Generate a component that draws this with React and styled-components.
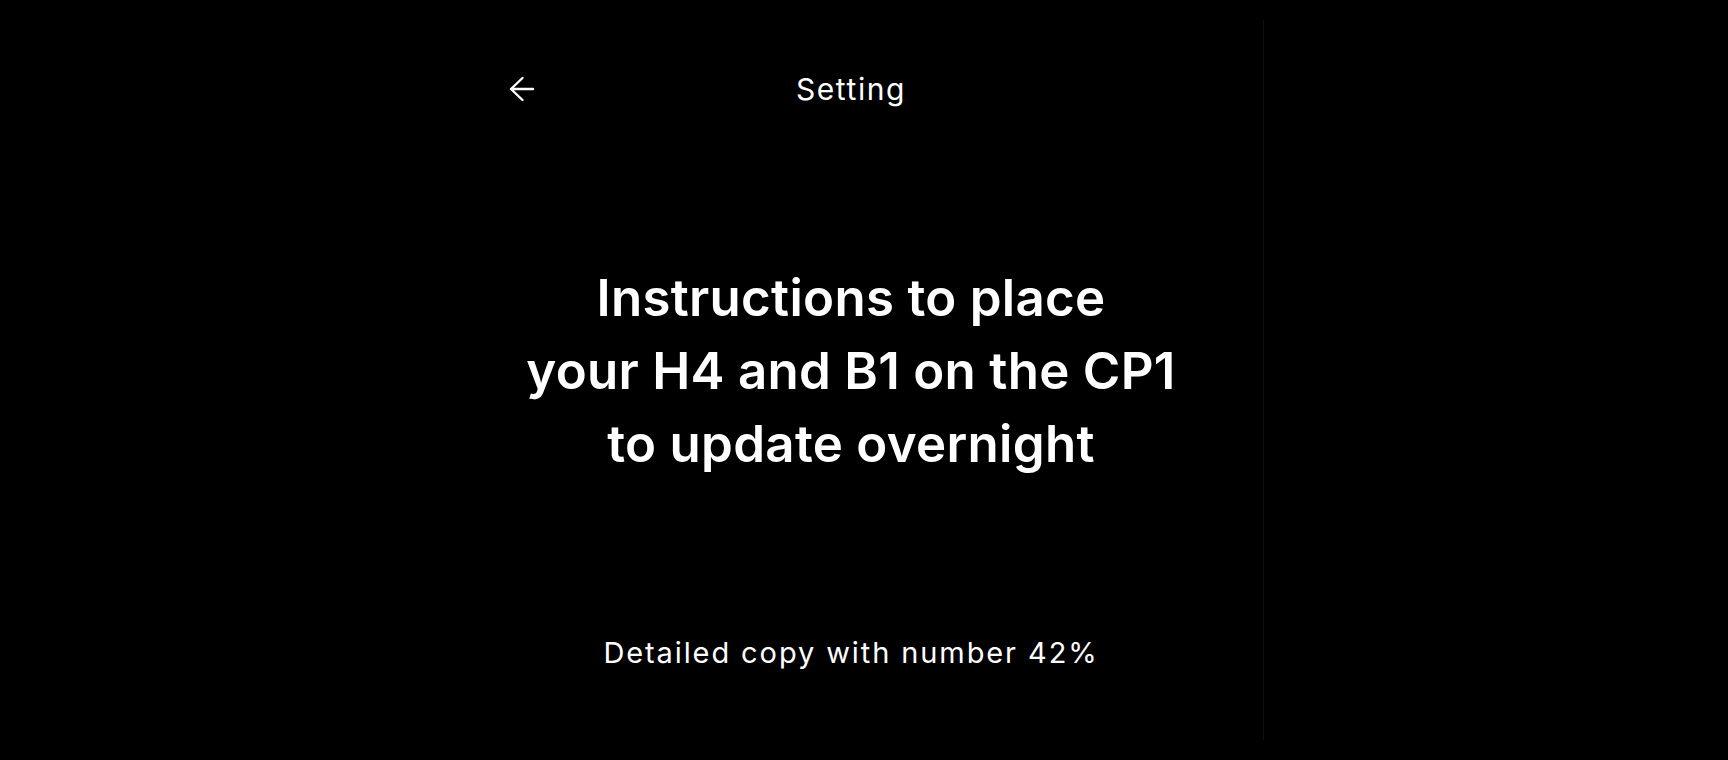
import React from "react";
import styled, { createGlobalStyle } from "styled-components";

const GlobalStyle = createGlobalStyle`
  html, body {
    margin: 0;
    padding: 0;
    background: #000;
  }
  body {
    font-family: "Inter", "Noto Sans", sans-serif;
    color: #fff;
  }
`;

const Page = styled.div`
  display: flex;
  height: 760px;
  padding-left: 439px;
  box-sizing: border-box;
  background: #000;
`;

const Panel = styled.main`
  width: 824px;
  margin: 20px 0;
  border-right: 1px solid #0d110b;
  display: flex;
  flex-direction: column;
  align-items: stretch;
`;

const Header = styled.header`
  display: grid;
  grid-template-columns: 1fr auto 1fr;
  align-items: center;
  height: 56px;
  margin-top: 41px;
`;

const BackButton = styled.button`
  justify-self: start;
  margin-left: 70px;
  padding: 0;
  border: 0;
  background: transparent;
  color: #fff;
  display: flex;
  align-items: center;
  cursor: pointer;
`;

const Title = styled.h1`
  margin: 0;
  font-size: 30px;
  font-weight: 400;
  line-height: 36px;
  letter-spacing: 1.6px;
`;

const Heading = styled.h2`
  margin: 144px 0 0;
  text-align: center;
  font-size: 51px;
  font-weight: 600;
  line-height: 73px;
  letter-spacing: 0.3px;
`;

const Copy = styled.p`
  margin: 155px 0 0;
  text-align: center;
  font-size: 29px;
  font-weight: 400;
  line-height: 36px;
  letter-spacing: 1.9px;
`;

const ArrowLeft = () => (
  <svg width="26" height="26" viewBox="0 0 26 26" fill="none">
    <path
      d="M13.5 2 L2 13 L13.5 24 M2 13 H24"
      stroke="currentColor"
      strokeWidth="2.4"
      strokeLinecap="round"
      strokeLinejoin="round"
    />
  </svg>
);

export default function App() {
  return (
    <>
      <GlobalStyle />
      <Page>
        <Panel>
          <Header>
            <BackButton aria-label="Back">
              <ArrowLeft />
            </BackButton>
            <Title>Setting</Title>
            <span />
          </Header>
          <Heading>
            Instructions to place
            <br />
            your H4 and B1 on the CP1
            <br />
            to update overnight
          </Heading>
          <Copy>Detailed copy with number 42%</Copy>
        </Panel>
      </Page>
    </>
  );
}
